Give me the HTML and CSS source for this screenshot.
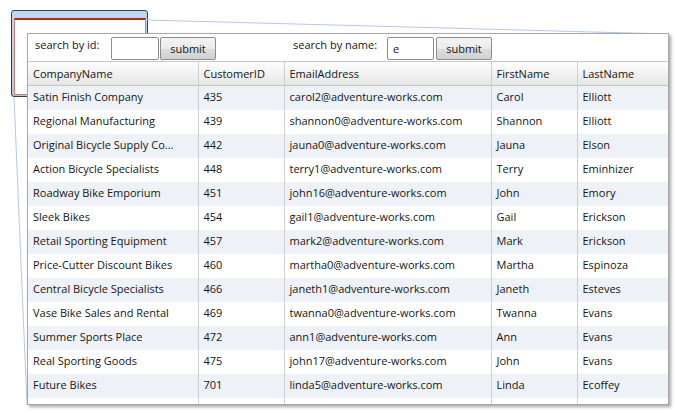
FILE: index.html
```html
<!DOCTYPE html>
<html>
<head>
<meta charset="utf-8">
<link rel="stylesheet" href="styles.css">
</head>
<body>
<div class="canvas">
  <div class="mini">
    <div class="mini-frame"></div>
  </div>
  <svg class="callout" width="677" height="413" viewBox="0 0 677 413">
    <line x1="147" y1="20" x2="668" y2="34" stroke="#b4c8ea" stroke-width="1"/>
    <line x1="14" y1="97" x2="27" y2="405" stroke="#b4c8ea" stroke-width="1"/>
  </svg>
  <div class="panel">
    <div class="search">
      <div class="group group-id">
        <span class="label">search by id:</span>
        <span class="input"></span>
        <span class="btn">submit</span>
      </div>
      <div class="group group-name">
        <span class="label">search by name:</span>
        <span class="input">e</span>
        <span class="btn">submit</span>
      </div>
    </div>
    <table class="grid">
      <colgroup>
        <col class="c1"><col class="c2"><col class="c3"><col class="c4"><col class="c5">
      </colgroup>
      <thead>
        <tr><th>CompanyName</th><th>CustomerID</th><th>EmailAddress</th><th>FirstName</th><th>LastName</th></tr>
      </thead>
      <tbody>
        <tr><td>Satin Finish Company</td><td>435</td><td>carol2@adventure-works.com</td><td>Carol</td><td>Elliott</td></tr>
        <tr><td>Regional Manufacturing</td><td>439</td><td>shannon0@adventure-works.com</td><td>Shannon</td><td>Elliott</td></tr>
        <tr><td>Original Bicycle Supply Co...</td><td>442</td><td>jauna0@adventure-works.com</td><td>Jauna</td><td>Elson</td></tr>
        <tr><td>Action Bicycle Specialists</td><td>448</td><td>terry1@adventure-works.com</td><td>Terry</td><td>Eminhizer</td></tr>
        <tr><td>Roadway Bike Emporium</td><td>451</td><td>john16@adventure-works.com</td><td>John</td><td>Emory</td></tr>
        <tr><td>Sleek Bikes</td><td>454</td><td>gail1@adventure-works.com</td><td>Gail</td><td>Erickson</td></tr>
        <tr><td>Retail Sporting Equipment</td><td>457</td><td>mark2@adventure-works.com</td><td>Mark</td><td>Erickson</td></tr>
        <tr><td>Price-Cutter Discount Bikes</td><td>460</td><td>martha0@adventure-works.com</td><td>Martha</td><td>Espinoza</td></tr>
        <tr><td>Central Bicycle Specialists</td><td>466</td><td>janeth1@adventure-works.com</td><td>Janeth</td><td>Esteves</td></tr>
        <tr><td>Vase Bike Sales and Rental</td><td>469</td><td>twanna0@adventure-works.com</td><td>Twanna</td><td>Evans</td></tr>
        <tr><td>Summer Sports Place</td><td>472</td><td>ann1@adventure-works.com</td><td>Ann</td><td>Evans</td></tr>
        <tr><td>Real Sporting Goods</td><td>475</td><td>john17@adventure-works.com</td><td>John</td><td>Evans</td></tr>
        <tr><td>Future Bikes</td><td>701</td><td>linda5@adventure-works.com</td><td>Linda</td><td>Ecoffey</td></tr>
        <tr class="filler"><td></td><td></td><td></td><td></td><td></td></tr>
      </tbody>
    </table>
  </div>
</div>
</body>
</html>
```
FILE: styles.css
```css
html, body {
  margin: 0;
  padding: 0;
  background: #ffffff;
}
.canvas {
  position: relative;
  width: 677px;
  height: 413px;
  overflow: hidden;
  font-family: "Open Sans", "Noto Sans", sans-serif;
  font-size: 11px;
  color: #151515;
}
.mini {
  position: absolute;
  left: 11px;
  top: 10px;
  width: 135px;
  height: 85px;
  border: 1px solid #3c3c3c;
  border-radius: 3px;
  background: linear-gradient(#bcd8f2, #a9cbee);
  box-sizing: content-box;
}
.mini-frame {
  position: absolute;
  left: 2px;
  top: 7px;
  right: 1px;
  bottom: 1px;
  background: #ffffff;
  border-top: 2px solid #b8231a;
  border-left: 1px solid #e07a68;
  border-right: 1px solid #e07a68;
  border-bottom: 1px solid #e07a68;
}
.callout {
  position: absolute;
  left: 0;
  top: 0;
}
.panel {
  position: absolute;
  left: 27px;
  top: 33px;
  width: 640px;
  height: 370px;
  background: #ffffff;
  border: 1px solid #a8a8a8;
  box-shadow: 2px 2px 3px rgba(0, 0, 0, 0.35);
  display: flex;
  flex-direction: column;
  overflow: hidden;
}
.search {
  height: 27px;
  flex: none;
  display: flex;
  align-items: flex-start;
  border-bottom: 1px solid #c8c8c8;
}
.group {
  display: flex;
  align-items: flex-start;
}
.group-id {
  margin-left: 7px;
}
.group-name {
  margin-left: 77px;
}
.label {
  padding-top: 4px;
  line-height: 14px;
}
.group-id .label { width: 76px; }
.group-name .label { width: 94px; }
.input {
  margin-top: 3px;
  width: 48px;
  height: 23px;
  border: 1px solid #8e8e8e;
  border-radius: 2px;
  background: #fff;
  box-sizing: border-box;
  padding: 4px 5px;
  line-height: 14px;
}
.group-name .input { width: 47px; }
.btn {
  margin-top: 3px;
  margin-left: 1px;
  width: 56px;
  height: 23px;
  box-sizing: border-box;
  border: 1px solid #8c8c8c;
  border-radius: 2px;
  background: linear-gradient(#f4f4f4 0%, #ebebeb 50%, #dcdcdc 51%, #d2d2d2 100%);
  text-align: center;
  line-height: 21px;
}
.group-name .btn { margin-left: 2px; }
.grid {
  border-collapse: collapse;
  table-layout: fixed;
  width: 640px;
}
.c1 { width: 170px; }
.c2 { width: 86px; }
.c3 { width: 207px; }
.c4 { width: 86px; }
.c5 { width: 91px; }
.grid th {
  height: 22px;
  text-align: left;
  font-weight: normal;
  padding: 1px 5px 0;
  line-height: 14px;
  background: linear-gradient(#fdfdfd, #e6e6e6);
  border-right: 1px solid #cfcfcf;
  border-bottom: 1px solid #c6c6c6;
  white-space: nowrap;
  overflow: hidden;
}
.grid td {
  height: 22px;
  padding: 0 5px 2px;
  line-height: 14px;
  border-right: 1px solid #cfcfcf;
  white-space: nowrap;
  overflow: hidden;
}
.grid th:last-child, .grid td:last-child {
  border-right: none;
}
.grid tbody tr:nth-child(odd) td {
  background: #eef2f8;
}
.grid tbody tr.filler td {
  height: 6px;
  padding: 0;
  background: #ffffff;
}
```
